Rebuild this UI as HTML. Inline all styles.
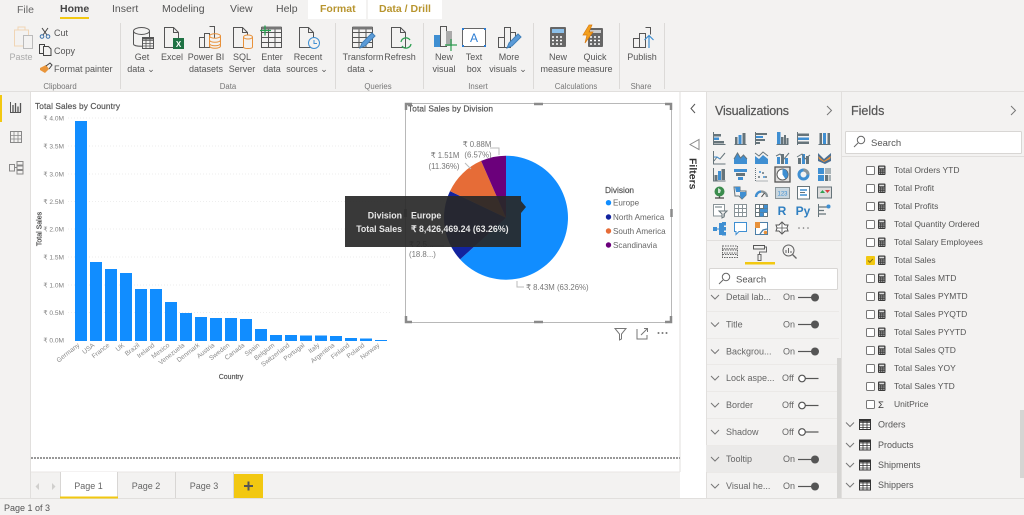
<!DOCTYPE html>
<html><head><meta charset="utf-8"><title>Power BI</title>
<style>
html,body{margin:0;padding:0;width:1024px;height:515px;overflow:hidden;background:#f3f2f1}
svg{display:block;font-family:"Liberation Sans",sans-serif;filter:blur(.35px)}
.r{font-size:9px;fill:#555;text-anchor:middle}
.g{font-size:7.8px;fill:#777;text-anchor:middle}
.t{font-size:10.5px;fill:#555}
.i{fill:none;stroke:#555;stroke-width:1}
.b{fill:#3f8fd2}.k{fill:#66747a}
.v{fill:none;stroke:#66747a;stroke-width:1}
.ya{font-size:6.6px;fill:#808080;text-anchor:end}
.xa{font-size:6.6px;fill:#8a8a8a;text-anchor:end}
.f{font-size:9px;fill:#555}
.fd{font-size:8.5px;fill:#555}
.p{font-size:7.8px;fill:#777}
.l{font-size:8.1px;fill:#666}
.fl{font-size:9px;fill:#666}
.on{font-size:9px;fill:#666}
.h{fill:#555;stroke:#555;stroke-width:.2}
</style></head><body>
<svg width="1024" height="515" viewBox="0 0 1024 515" xmlns="http://www.w3.org/2000/svg">
<defs>
<g id="calc"><rect x="0" y="1" width="7.500" height="9.500" rx="1" fill="#3a3a3a"/><rect x="1.200" y="2.200" width="5" height="1.600" fill="#ddd"/><path d="M1.200 5.500h1M3.300 5.500h1M5.400 5.500h1M1.200 7.300h1M3.300 7.300h1M5.400 7.300h1M1.200 9.100h1M3.300 9.100h1M5.400 9.100h1" stroke="#ddd" stroke-width=".9"/></g>
<g id="tbl"><rect x=".5" y=".5" width="11" height="10" fill="#fff" stroke="#333"/><path d="M.5 3.500h11M.5 6h11M.5 8.500h11M4 1v10M8 1v10" stroke="#333" stroke-width=".8"/><rect x=".5" y=".5" width="11" height="2.300" fill="#333"/></g>
<path id="chev" d="M0 0l4 4 4-4" fill="none" stroke="#777" stroke-width="1"/>
<g id="tOn"><path d="M0 0h16" stroke="#555" stroke-width="1.200"/><circle cx="17" cy="0" r="4" fill="#555"/></g>
<g id="tOff"><circle cx="4" cy="0" r="3.300" fill="#fff" stroke="#555" stroke-width="1.200"/><path d="M7.500 0h13" stroke="#555" stroke-width="1.200"/></g>
<rect id="cb" x=".5" y=".5" width="8" height="8" rx="1" fill="#fff" stroke="#777"/>
</defs>

<!-- backgrounds -->
<rect width="1024" height="515" fill="#f3f2f1"/>
<rect x="31" y="92" width="649" height="380" fill="#fff"/>
<rect x="680" y="92" width="26" height="406" fill="#fff"/>
<rect x="0" y="91" width="1024" height="1" fill="#e1dfdd"/>
<rect x="30" y="92" width="1" height="406" fill="#e1dfdd"/>
<rect x="679.500" y="92" width="1" height="380" fill="#e1dfdd"/>
<rect x="706" y="92" width="1" height="406" fill="#e1dfdd"/>
<rect x="841" y="92" width="1" height="406" fill="#e1dfdd"/>
<rect x="0" y="498" width="1024" height="1" fill="#e1dfdd"/>

<!-- tabs -->
<rect x="308" y="0" width="58" height="19" fill="#fff"/>
<rect x="368" y="0" width="74" height="19" fill="#fff"/>
<text x="17" y="13" class="t" style="fill:#666">File</text>
<text x="60" y="12" class="t" style="font-weight:bold;fill:#444">Home</text>
<rect x="60" y="17" width="29" height="2" fill="#f2c811"/>
<text x="112" y="12" class="t">Insert</text>
<text x="162" y="12" class="t">Modeling</text>
<text x="230" y="12" class="t">View</text>
<text x="276" y="12" class="t">Help</text>
<text x="320" y="12" class="t" style="fill:#b8952f;font-weight:bold">Format</text>
<text x="379" y="12" class="t" style="fill:#b8952f;font-weight:bold">Data / Drill</text>

<!-- ribbon separators -->
<path d="M120.500 23v66M335.500 23v66M423.500 23v66M533.500 23v66M619.500 23v66M664.500 23v66" stroke="#dcdad8"/>

<!-- ribbon labels -->
<text x="21" y="60" class="r" style="fill:#aaa">Paste</text>
<text x="54" y="36" class="f">Cut</text>
<text x="54" y="54" class="f">Copy</text>
<text x="54" y="72" class="f">Format painter</text>
<text x="60" y="89" class="g">Clipboard</text>
<text x="142" y="60" class="r">Get</text><text x="141" y="72" class="r">data ⌄</text>
<text x="172" y="60" class="r">Excel</text>
<text x="206" y="60" class="r">Power BI</text><text x="206" y="72" class="r">datasets</text>
<text x="242" y="60" class="r">SQL</text><text x="242" y="72" class="r">Server</text>
<text x="272" y="60" class="r">Enter</text><text x="272" y="72" class="r">data</text>
<text x="308" y="60" class="r">Recent</text><text x="307" y="72" class="r">sources ⌄</text>
<text x="228" y="89" class="g">Data</text>
<text x="363" y="60" class="r">Transform</text><text x="361" y="72" class="r">data ⌄</text>
<text x="400" y="60" class="r">Refresh</text>
<text x="378" y="89" class="g">Queries</text>
<text x="444" y="60" class="r">New</text><text x="444" y="72" class="r">visual</text>
<text x="474" y="60" class="r">Text</text><text x="474" y="72" class="r">box</text>
<text x="509" y="60" class="r">More</text><text x="508" y="72" class="r">visuals ⌄</text>
<text x="478" y="89" class="g">Insert</text>
<text x="558" y="60" class="r">New</text><text x="558" y="72" class="r">measure</text>
<text x="595" y="60" class="r">Quick</text><text x="595" y="72" class="r">measure</text>
<text x="576" y="89" class="g">Calculations</text>
<text x="642" y="60" class="r">Publish</text>
<text x="641" y="89" class="g">Share</text>

<!-- ribbon icons -->
<g class="i">
<path d="M14.500 30h14v16h-14z" stroke="#f0d5b5"/><path d="M18 30v-3h7v3" stroke="#f0d5b5"/><rect x="23.500" y="35.500" width="9" height="13" fill="#f3f2f1" stroke="#bbb"/>
<path d="M42 28l5 7M48 28l-5 7" stroke="#444"/><circle cx="42" cy="36.500" r="1.800" stroke="#3a70a8"/><circle cx="48" cy="36.500" r="1.800" stroke="#3a70a8"/>
<path d="M39.500 44.500h5v9h-5z" stroke="#444"/><path d="M43.500 46.500h5l2.500 2.500v6.500h-7.500z" fill="#f3f2f1" stroke="#444"/>
<path d="M40 68l6-3 3 4-4 4-5-3z" fill="#e9953a" stroke="none"/><path d="M46 66l4-3 2 2-3 4" stroke="#444"/>
<path d="M133.500 31v13c0 3 16 3 16 0V31" /><ellipse cx="141.500" cy="31" rx="8" ry="3.500"/><rect x="142.500" y="37.500" width="11" height="11" fill="#f3f2f1"/><path d="M142.500 40.500h11M142.500 43.500h11M142.500 46h11M146 38v10M150 38v10" stroke-width=".8"/><rect x="142.500" y="37.500" width="11" height="2" fill="#555" stroke="none"/>
<path d="M164.500 27.500h9l5 5v15h-14z"/><path d="M173.500 27.500v5h5"/><rect x="173" y="38" width="11" height="11" fill="#1f7244" stroke="none"/>
<path d="M199.500 37.500h5v10h-5zM204.500 33.500h5v14h-5zM209.500 26.500h5v12"/><g stroke="#e8913a"><path d="M209.500 36v10c0 3 11 3 11 0V36"/><ellipse cx="215" cy="36" rx="5.500" ry="2.200"/><path d="M209.500 40c0 3 11 3 11 0M209.500 43.500c0 3 11 3 11 0"/></g>
<path d="M233.500 27.500h9l5 5v15h-14z"/><path d="M242.500 27.500v5h5"/><g stroke="#e8913a"><path d="M243.500 37v10c0 2 9 2 9 0V37" fill="#f3f2f1"/><ellipse cx="248" cy="37" rx="4.500" ry="2" fill="#f3f2f1"/></g>
<rect x="261.500" y="27.500" width="20" height="20"/><path d="M261.500 32.500h20M261.500 37.500h20M261.500 42.500h20M268.500 28v20M275 28v20"/><rect x="261.500" y="26.500" width="20" height="3" fill="#777" stroke="none"/><path d="M265 25.500v10M260 30.500h11" stroke="#27a050" stroke-width="1.300"/>
<path d="M299.500 27.500h9l5 5v15h-14z"/><path d="M308.500 27.500v5h5"/><circle cx="314" cy="43" r="5.500" fill="#f3f2f1" stroke="#3f8fd2"/><path d="M314 40v3.500h3" stroke="#3f8fd2"/>
<rect x="352.500" y="27.500" width="20" height="20"/><path d="M352.500 32.500h20M352.500 37.500h20M352.500 42.500h20M359 28v20M366 28v20"/><rect x="352.500" y="26.500" width="20" height="3" fill="#777" stroke="none"/><path d="M360 48l2-5 10-10 3 3-10 10z" fill="#5b9bd8" stroke="#3f7fb8"/>
<path d="M391.500 27.500h9l5 5v15h-14z"/><path d="M400.500 27.500v5h5"/><path d="M401 42a5 5 0 0 1 9-2M411 44a5 5 0 0 1-9 2" stroke="#2ea052" stroke-width="1.300"/>
<rect x="434" y="35" width="6" height="12" fill="#3f8fd2" stroke="none"/><path d="M440.500 26.500h6v20h-6z"/><rect x="446" y="31" width="6" height="15" fill="#aaa" stroke="none"/><path d="M451 39v12M445 45h12" stroke="#2ea052" stroke-width="1.200"/>
<rect x="462.500" y="28.500" width="23" height="18" fill="#fff" stroke="#666"/><rect x="462" y="28" width="2" height="2" fill="#2b7cd3" stroke="none"/><rect x="484" y="28" width="2" height="2" fill="#2b7cd3" stroke="none"/><rect x="462" y="45" width="2" height="2" fill="#2b7cd3" stroke="none"/><rect x="484" y="45" width="2" height="2" fill="#2b7cd3" stroke="none"/>
<path d="M498.500 37.500h6v10h-6zM504.500 27.500h6v20h-6zM510.500 32.500h5v6"/><path d="M507 48l2-5 9-9 3 3-9 9z" fill="#5b9bd8" stroke="#3f7fb8"/>
<rect x="550" y="27" width="16" height="20" rx="1" fill="#666" stroke="none"/><rect x="552" y="29" width="12" height="4" fill="#8cc0ea" stroke="none"/><path d="M552 37h2M556 37h2M560 37h2M552 40.500h2M556 40.500h2M560 40.500h2M552 44h2M556 44h2M560 44h2" stroke="#fff" stroke-width="1.500"/>
<rect x="588" y="28" width="15" height="19" rx="1" fill="#666" stroke="none"/><rect x="590" y="30" width="11" height="3" fill="#ccc" stroke="none"/><path d="M590 37h2M594 37h2M598 37h2M590 40.500h2M594 40.500h2M598 40.500h2M590 44h2M594 44h2M598 44h2" stroke="#fff" stroke-width="1.500"/><path d="M589 25l-6 10h4l-2 8 8-11h-4l3-7z" fill="#f2a01e" stroke="#d97a10" stroke-width=".7"/>
<path d="M633.500 38.500h6v9h-6zM639.500 33.500h6v14h-6zM645.500 27.500h5v7"/><path d="M649 48V36M644.500 40l4.500-4.500 4.500 4.500" stroke="#3f8fd2" stroke-width="1.200"/>
</g>
<text x="474" y="42" font-size="12" fill="#2b7cd3" text-anchor="middle">A</text>
<text x="178.500" y="47" font-size="8" fill="#fff" font-weight="bold" text-anchor="middle">X</text>

<!-- left nav -->
<rect x="0" y="95" width="2" height="27" fill="#f2c811"/>
<g fill="none" stroke="#555">
<path d="M10.500 102v10.500h10.500"/><path d="M13 105v7M15.500 103v9M18 106.500v5.500M20.500 103v9" stroke-width="1.300"/>
<rect x="10.500" y="131.500" width="11" height="11" stroke="#888"/><path d="M10.500 135.500h11M10.500 139h11M14 132v11M18 132v11" stroke="#888" stroke-width=".8"/>
<path d="M9.500 164.500h5v6.500h-5zM17 161.500h6v3.500h-6zM17 166h6v3.500h-6zM17 170.500h6v3.500h-6zM14.500 167.500h2.500" stroke="#888"/>
</g>

<!-- bar chart -->
<text x="35" y="109" font-size="8.300" class="h" textLength="85">Total Sales by Country</text>
<g stroke="#eee" stroke-width="1" stroke-dasharray="1 2">
<path d="M68 118h322M68 146h322M68 174h322M68 201.500h322M68 229h322M68 257h322M68 285h322M68 312.500h322"/>
</g>
<g class="ya">
<text x="64" y="120.500">₹ 4.0M</text><text x="64" y="148.500">₹ 3.5M</text><text x="64" y="176.500">₹ 3.0M</text><text x="64" y="204">₹ 2.5M</text><text x="64" y="231.500">₹ 2.0M</text><text x="64" y="259.500">₹ 1.5M</text><text x="64" y="287.500">₹ 1.0M</text><text x="64" y="315">₹ 0.5M</text><text x="64" y="342.500">₹ 0.0M</text>
</g>
<g fill="#118dff">
<rect x="75" y="121" width="12" height="220"/>
<rect x="90" y="262" width="12" height="79"/>
<rect x="105" y="269" width="12" height="72"/>
<rect x="120" y="273" width="12" height="68"/>
<rect x="135" y="289" width="12" height="52"/>
<rect x="150" y="289" width="12" height="52"/>
<rect x="165" y="302" width="12" height="39"/>
<rect x="180" y="313" width="12" height="28"/>
<rect x="195" y="317" width="12" height="24"/>
<rect x="210" y="318" width="12" height="23"/>
<rect x="225" y="318" width="12" height="23"/>
<rect x="240" y="319" width="12" height="22"/>
<rect x="255" y="329" width="12" height="12"/>
<rect x="270" y="335" width="12" height="6"/>
<rect x="285" y="335" width="12" height="6"/>
<rect x="300" y="335.500" width="12" height="5.500"/>
<rect x="315" y="335.500" width="12" height="5.500"/>
<rect x="330" y="336" width="12" height="5"/>
<rect x="345" y="338" width="12" height="3"/>
<rect x="360" y="338.500" width="12" height="2.500"/>
<rect x="375" y="340" width="12" height="1"/>
</g>
<g class="xa">
<text transform="translate(80 346) rotate(-38)">Germany</text>
<text transform="translate(95 346) rotate(-38)">USA</text>
<text transform="translate(110 346) rotate(-38)">France</text>
<text transform="translate(125 346) rotate(-38)">UK</text>
<text transform="translate(140 346) rotate(-38)">Brazil</text>
<text transform="translate(155 346) rotate(-38)">Ireland</text>
<text transform="translate(170 346) rotate(-38)">Mexico</text>
<text transform="translate(185 346) rotate(-38)">Venezuela</text>
<text transform="translate(200 346) rotate(-38)">Denmark</text>
<text transform="translate(215 346) rotate(-38)">Austria</text>
<text transform="translate(230 346) rotate(-38)">Sweden</text>
<text transform="translate(245 346) rotate(-38)">Canada</text>
<text transform="translate(260 346) rotate(-38)">Spain</text>
<text transform="translate(275 346) rotate(-38)">Belgium</text>
<text transform="translate(290 346) rotate(-38)">Switzerland</text>
<text transform="translate(305 346) rotate(-38)">Portugal</text>
<text transform="translate(320 346) rotate(-38)">Italy</text>
<text transform="translate(335 346) rotate(-38)">Argentina</text>
<text transform="translate(350 346) rotate(-38)">Finland</text>
<text transform="translate(365 346) rotate(-38)">Poland</text>
<text transform="translate(380 346) rotate(-38)">Norway</text>
</g>
<text transform="translate(41.500 229) rotate(-90)" font-size="7" class="h" text-anchor="middle" style="fill:#444;stroke:#444">Total Sales</text>
<text x="231" y="379" font-size="7" class="h" text-anchor="middle">Country</text>

<!-- dotted page line -->
<path d="M31 458h649" stroke="#777" stroke-width="1.500" stroke-dasharray="2 1"/>

<!-- pie visual -->
<rect x="405.500" y="103.500" width="266" height="219" fill="#fff" stroke="#b8b8b8"/>
<g fill="none" stroke="#8a8a8a" stroke-width="2.500">
<path d="M406 110v-6h6M665 104h6v6M406 316v6h6M665 322h6v-6"/>
<path d="M534 104h9M534 322h9M405.500 209v8M671.500 209v8"/>
</g>
<text x="408" y="111.500" font-size="8.300" class="h" textLength="85">Total Sales by Division</text>
<path d="M506 217.700V155.700A62 62 0 1 1 460.100 259.400Z" fill="#118dff"/>
<path d="M506 217.700L460.100 259.400A62 62 0 0 1 450 191.100Z" fill="#12239e"/>
<path d="M506 217.700L450 191.100A62 62 0 0 1 481.100 160.900Z" fill="#e66c37"/>
<path d="M506 217.700L481.100 160.900A62 62 0 0 1 506 155.700Z" fill="#6b007b"/>
<g fill="none" stroke="#bbb">
<path d="M490 148h9v7M465 163l6 6M517 281v6h7"/>
<path d="M430 246h14"/>
</g>
<g class="p">
<text x="477" y="147" text-anchor="middle">₹ 0.88M</text>
<text x="478" y="157.500" text-anchor="middle">(6.57%)</text>
<text x="445" y="158" text-anchor="middle">₹ 1.51M</text>
<text x="444" y="169" text-anchor="middle">(11.36%)</text>
<text x="409" y="247">₹ 2.5...</text>
<text x="409" y="257">(18.8...)</text>
<text x="526" y="290">₹ 8.43M (63.26%)</text>
</g>
<text x="605" y="193" font-size="8.300" class="h">Division</text>
<circle cx="608.500" cy="202.700" r="2.700" fill="#118dff"/><text x="613" y="205.500" class="l">Europe</text>
<circle cx="608.500" cy="217" r="2.700" fill="#12239e"/><text x="613" y="220" class="l">North America</text>
<circle cx="608.500" cy="231" r="2.700" fill="#e66c37"/><text x="613" y="234" class="l">South America</text>
<circle cx="608.500" cy="245" r="2.700" fill="#6b007b"/><text x="613" y="248" class="l">Scandinavia</text>

<!-- tooltip -->
<path d="M345 196H521V201L526 207 521 213V247H345Z" fill="#282828" fill-opacity=".92"/>
<g font-size="8.800" font-weight="bold" fill="#e8e8e8">
<text x="402" y="218.500" text-anchor="end">Division</text>
<text x="402" y="232" text-anchor="end">Total Sales</text>
<text x="411" y="218.500">Europe</text>
<text x="411" y="232">₹ 8,426,469.24 (63.26%)</text>
</g>

<!-- visual header -->
<g fill="none" stroke="#777">
<path d="M615 328.500h11l-4.500 5.500v5l-2 1v-6z"/>
<path d="M637 329v10h10v-4M641 335l6-6M644 328.500h3.500v3.500"/>
</g>
<g fill="#777"><circle cx="658.500" cy="333" r="1"/><circle cx="662.500" cy="333" r="1"/><circle cx="666.500" cy="333" r="1"/></g>

<!-- filters panel -->
<path d="M695 104l-4 4.500 4 4.500" fill="none" stroke="#555"/>
<path d="M690 144.500l9-5v10z" fill="none" stroke="#888"/>
<text transform="translate(689.500 158) rotate(90)" font-size="10.500" font-weight="bold" fill="#333">Filters</text>

<!-- visualizations -->
<text x="715" y="115" font-size="12.500" class="h" textLength="74">Visualizations</text>
<path d="M827 106l4.500 4.500-4.500 4.500" fill="none" stroke="#777"/>
<rect x="707" y="240" width="134" height="1" fill="#e1dfdd"/>

<!-- icon grid -->
<g>
<g transform="translate(713 132)"><path class="v" d="M.5 0v13M.5 12.500h12"/><rect x="1" y="2" width="7" height="2.500" class="k"/><rect x="1" y="5.500" width="5" height="2.500" class="b"/><rect x="1" y="9" width="10" height="2.500" class="k"/></g>
<g transform="translate(734 132)"><path class="v" d="M.5 12.500h12"/><rect x="1" y="5" width="2.500" height="7" class="k"/><rect x="4.500" y="3" width="3" height="9" class="b"/><rect x="8.500" y="1" width="3" height="11" class="k"/></g>
<g transform="translate(755 132)"><path class="v" d="M.5 0v13"/><rect x="1" y="1" width="11" height="2" class="k"/><rect x="1" y="4" width="7" height="2" class="b"/><rect x="1" y="7" width="9" height="2" class="k"/><rect x="1" y="10" width="4" height="2" class="k"/></g>
<g transform="translate(776 132)"><path class="v" d="M.5 12.500h12"/><rect x="1" y="0" width="3.500" height="12" class="b"/><rect x="5" y="5" width="2.500" height="7" class="k"/><rect x="8" y="3" width="2" height="9" class="k"/><rect x="10.500" y="6" width="2" height="6" class="k"/></g>
<g transform="translate(797 132)"><path class="v" d="M.5 0v13"/><rect x="1" y="1.500" width="11" height="2.500" class="k"/><rect x="1" y="5.500" width="11" height="2.500" class="b"/><rect x="1" y="9.500" width="11" height="2.500" class="k"/></g>
<g transform="translate(818 132)"><path class="v" d="M.5 12.500h12"/><rect x="1.500" y="1" width="2.500" height="11" class="k"/><rect x="5" y="1" width="3" height="11" class="b"/><rect x="9.500" y="1" width="2.500" height="11" class="k"/></g>
<g transform="translate(713 151)"><path class="v" d="M.5 0v13h12"/><path d="M1 10l3-4 3 2 5-6" fill="none" stroke="#66747a"/><path d="M1 6l3 0 3 2" fill="none" stroke="#3f8fd2"/></g>
<g transform="translate(734 151)"><path d="M0 13V8l3.500-6 3 5 3-3 3.500 4v5z" class="b"/><path class="v" d="M0 8l3.500-6 3 5 3-3 3.500 4"/></g>
<g transform="translate(755 151)"><path d="M0 5l4 3 4-4 5 4v5H0z" class="b"/><path class="v" d="M0 2l4 3 4-4 5 4"/></g>
<g transform="translate(776 151)"><rect x="1" y="6" width="3" height="7" class="b"/><rect x="5" y="3" width="3" height="10" class="k"/><rect x="9" y="7" width="3" height="6" class="b"/><path class="v" d="M0 5l4-2 4 5 5-6"/></g>
<g transform="translate(797 151)"><rect x="1" y="7" width="3" height="6" class="k"/><rect x="5" y="3" width="3" height="10" class="b"/><rect x="9" y="5" width="3" height="8" class="k"/><path class="v" d="M0 6l5-3 3 5 5-4"/></g>
<g transform="translate(818 151)"><path d="M0 2l6 6 7-6v8l-6 3-7-3z" fill="#4c6f92"/><path d="M0 5l6 5 7-5-1 3-6 3-5-3z" fill="#e8913a"/></g>
<g transform="translate(713 168)"><path class="v" d="M.5 0v13h12"/><rect x="1.500" y="7" width="3" height="5.500" class="k"/><rect x="5" y="3" width="3" height="9" class="b"/><rect x="8.500" y="1" width="3.500" height="11" class="k"/></g>
<g transform="translate(734 168)"><rect x="0" y="1" width="13" height="3" class="b"/><rect x="2" y="5" width="9" height="3" class="k"/><rect x="4" y="9" width="5" height="3" class="b"/></g>
<g transform="translate(755 168)"><path class="v" d="M.5 0v13h12" stroke-dasharray="1 1"/><g class="k"><circle cx="4" cy="9" r="1"/><circle cx="8" cy="5" r="1"/><circle cx="11" cy="9" r="1"/></g><g class="b"><circle cx="5" cy="4" r="1"/><circle cx="9" cy="9" r="1"/></g></g>
<rect x="775" y="167" width="15" height="15" fill="#e0dfde" stroke="#555" stroke-width="1.300"/>
<circle cx="782.500" cy="174.500" r="5.500" fill="#fff" stroke="#5c5c5c"/><path d="M782.500 174.500V169a5.500 5.500 0 0 1 3 10z" class="b"/>
<circle cx="803.500" cy="174.500" r="4.500" fill="none" stroke="#3f8fd2" stroke-width="3"/><path d="M803.500 170a4.500 4.500 0 0 1 4.500 4.500" fill="none" stroke="#8a9498" stroke-width="3"/>
<g transform="translate(818 168)"><rect x="0" y="0" width="6" height="13" class="b"/><rect x="7" y="0" width="6" height="6" fill="#a8b2b6"/><rect x="7" y="7" width="3" height="6" class="k"/><rect x="10.500" y="7" width="2.500" height="6" fill="#a8b2b6"/><rect x="0" y="6" width="6" height="1" fill="#f3f2f1"/></g>
<g transform="translate(713 186)"><circle cx="6.500" cy="5.500" r="5" fill="#3c8d4e"/><path d="M5 2l3 2-1 3-2 0z" fill="#cfe4d4"/><path d="M2 12h9M6.500 10.500V12" stroke="#444" stroke-width="1.300"/></g>
<g transform="translate(734 186)"><path d="M0 1h6v4l6 0v4l-4 4-3-3H1z" fill="none" stroke="#66747a"/><path d="M6 6h6v3l-4 4-2-3z" class="b"/><path d="M1 1h5v5H2z" class="b"/></g>
<g transform="translate(755 186)"><path d="M1 11a5.500 5.500 0 0 1 11 0" fill="none" stroke="#8a9498" stroke-width="2.300"/><path d="M1 11a5.500 5.500 0 0 1 5-5.500" fill="none" stroke="#3f8fd2" stroke-width="2.300"/><path d="M6.500 11l3-4" stroke="#444"/></g>
<g transform="translate(775 186)"><rect x=".5" y="1.500" width="14" height="11" fill="#c9d6de" stroke="#8a9498"/></g>
<text x="782.500" y="195.500" font-size="6" fill="#3f8fd2" text-anchor="middle">123</text>
<g transform="translate(797 186)"><rect x=".5" y=".5" width="12" height="12.500" fill="#fff" stroke="#66747a"/><path d="M3 4h7M3 9h7" stroke="#3f8fd2" stroke-width="1.500"/><path d="M3 6.500h5" stroke="#66747a"/></g>
<g transform="translate(817 186)"><rect x=".5" y="1" width="14" height="11" fill="#ddd" stroke="#66747a"/><path d="M3 7l2.500-3L8 7z" fill="#2ea052"/><path d="M8 4h5l-2.500 3z" fill="#d83b3b"/></g>
<g transform="translate(713 204)"><rect x=".5" y=".5" width="11" height="11.500" fill="#fff" stroke="#8a9498"/><path d="M2 3h7" stroke="#66747a"/><path d="M6 7h8l-3 3v3l-2 1v-4z" fill="#f3f2f1" stroke="#66747a"/></g>
<g transform="translate(734 204)"><rect x=".5" y=".5" width="12" height="12" fill="#fff" stroke="#8a9498"/><path d="M.5 4.500h12M.5 8.500h12M4.500 1v12M8.500 1v12" stroke="#8a9498"/></g>
<g transform="translate(755 204)"><rect x=".5" y=".5" width="12" height="12" fill="#fff" stroke="#66747a"/><path d="M.5 4.500h12M.5 8.500h12M4.500 1v12M8.500 1v12" stroke="#66747a"/><rect x="5" y="5" width="7.500" height="3.500" class="b"/><rect x="5" y="9" width="3.500" height="3.500" class="b"/><rect x="9" y="1" width="3.500" height="3.500" class="b"/></g>
<text x="782" y="215" font-size="12" font-weight="bold" fill="#2f7fc1" text-anchor="middle">R</text>
<text x="803" y="215" font-size="12" font-weight="bold" fill="#2f7fc1" text-anchor="middle">Py</text>
<g transform="translate(818 204)"><path class="v" d="M.5 0v13"/><path d="M1 3h8M1 6.500h5M1 10h7" stroke="#66747a" stroke-width="1.300"/><circle cx="10.500" cy="2.500" r="2" class="b"/></g>
<g transform="translate(713 222)"><rect x="0" y="5" width="4" height="4" class="b"/><rect x="6" y="1" width="5" height="12" class="b"/><rect x="9" y="0" width="4" height="3.500" class="b"/><rect x="9" y="5" width="4" height="3.500" class="b"/><rect x="9" y="10" width="4" height="3.500" class="b"/><path d="M4 7h3" stroke="#3f8fd2"/></g>
<path d="M734.500 222.500h12v9h-7.500l-3 3v-3h-1.500z" fill="#fff" stroke="#3f8fd2"/>
<g transform="translate(755 222)"><rect x=".5" y=".5" width="12" height="12" fill="#fff" stroke="#4c7fa8"/><rect x="0" y="0" width="5" height="6" fill="#e8913a"/><path d="M5 12l3-4 4-1" fill="none" stroke="#4c7fa8" stroke-width="1.300"/><circle cx="10.500" cy="10.500" r="1.800" fill="#e8913a"/></g>
<path d="M782 222l3 3 3-0-1 3 1 3-3 0-3 3-3-3-3 0 1-3-1-3 3 0z" fill="#fff" stroke="#555"/><path d="M777 228h10M782 223v10" stroke="#555" stroke-width=".8"/>
<g fill="#777"><circle cx="799" cy="228" r=".8"/><circle cx="803.500" cy="228" r=".8"/><circle cx="808" cy="228" r=".8"/></g>
</g>

<!-- viz tabs -->
<g fill="none" stroke="#666">
<rect x="722.500" y="246" width="15" height="2.800" stroke-dasharray="1.500 1"/><rect x="722.500" y="250" width="15" height="3" stroke-dasharray="1.500 1"/><rect x="722.500" y="254.500" width="15" height="3" stroke-dasharray="1.500 1"/>
<rect x="753.500" y="245.500" width="11" height="3.500" stroke="#555"/><path d="M764.500 247h2v5h-7v2"/><rect x="758" y="254.500" width="3" height="6"/>
<circle cx="788.500" cy="250.500" r="5.500"/><path d="M786 253v-3M788.500 253v-5M791 253v-2"/><path d="M792.500 254.500l4 4" stroke-width="1.300"/>
</g>
<rect x="745" y="262" width="30" height="2.500" fill="#f2c811"/>
<rect x="709.500" y="268.500" width="128" height="21" rx="1" fill="#fff" stroke="#d8d6d4"/>
<g fill="none" stroke="#666"><circle cx="726" cy="277" r="3.700"/><path d="M723 280l-4 4"/></g>
<text x="736" y="282.500" font-size="9.500" fill="#555">Search</text>

<!-- format rows -->
<rect x="706" y="445" width="133" height="27" fill="#ebeae9"/>
<path d="M707 311.500h132M707 338.500h132M707 364.500h132M707 391.500h132M707 418.500h132M707 445.500h132M707 472.500h132" stroke="#ebe9e7"/>
<rect x="837" y="358" width="4" height="140" fill="#d6d5d3"/>
<g>
<use href="#chev" x="711" y="295"/><text x="726" y="300" class="fl">Detail lab...</text><text x="783" y="300" class="on">On</text><use href="#tOn" x="798" y="297.500"/>
<use href="#chev" x="711" y="322.500"/><text x="726" y="327.500" class="fl">Title</text><text x="783" y="327.500" class="on">On</text><use href="#tOn" x="798" y="324.500"/>
<use href="#chev" x="711" y="349.500"/><text x="726" y="354.500" class="fl">Backgrou...</text><text x="783" y="354.500" class="on">On</text><use href="#tOn" x="798" y="351.500"/>
<use href="#chev" x="711" y="376"/><text x="726" y="381" class="fl">Lock aspe...</text><text x="782" y="381" class="on">Off</text><use href="#tOff" x="798" y="378.500"/>
<use href="#chev" x="711" y="403"/><text x="726" y="408" class="fl">Border</text><text x="782" y="408" class="on">Off</text><use href="#tOff" x="798" y="405.500"/>
<use href="#chev" x="711" y="430"/><text x="726" y="435" class="fl">Shadow</text><text x="782" y="435" class="on">Off</text><use href="#tOff" x="798" y="432"/>
<use href="#chev" x="711" y="457"/><text x="726" y="462" class="fl">Tooltip</text><text x="783" y="462" class="on">On</text><use href="#tOn" x="798" y="459.500"/>
<use href="#chev" x="711" y="484"/><text x="726" y="489" class="fl">Visual he...</text><text x="783" y="489" class="on">On</text><use href="#tOn" x="798" y="486.500"/>
</g>

<!-- fields -->
<text x="851" y="115" font-size="12.500" class="h">Fields</text>
<path d="M1011 106l4.500 4.500-4.500 4.500" fill="none" stroke="#777"/>
<rect x="845.500" y="131.500" width="176" height="22" rx="1" fill="#fff" stroke="#d8d6d4"/>
<g fill="none" stroke="#666"><circle cx="861" cy="140" r="3.700"/><path d="M858 143l-4 4"/></g>
<text x="871" y="146" font-size="9.500" fill="#555">Search</text>
<rect x="842" y="156" width="182" height="1" fill="#e1dfdd"/>
<g>
<use href="#cb" x="866" y="166"/><use href="#calc" x="878" y="164.500"/><text x="894" y="173" class="fd">Total Orders YTD</text>
<use href="#cb" x="866" y="184"/><use href="#calc" x="878" y="182.500"/><text x="894" y="191" class="fd">Total Profit</text>
<use href="#cb" x="866" y="202"/><use href="#calc" x="878" y="200.500"/><text x="894" y="209" class="fd">Total Profits</text>
<use href="#cb" x="866" y="220"/><use href="#calc" x="878" y="218.500"/><text x="894" y="227" class="fd">Total Quantity Ordered</text>
<use href="#cb" x="866" y="238"/><use href="#calc" x="878" y="236.500"/><text x="894" y="245" class="fd">Total Salary Employees</text>
<rect x="866" y="256" width="9" height="9" rx="1" fill="#f2c811"/><path d="M868 260.500l1.800 1.800 3-3.300" fill="none" stroke="#806c10"/><use href="#calc" x="878" y="254.500"/><text x="894" y="263" class="fd">Total Sales</text>
<use href="#cb" x="866" y="274"/><use href="#calc" x="878" y="272.500"/><text x="894" y="281" class="fd">Total Sales MTD</text>
<use href="#cb" x="866" y="292"/><use href="#calc" x="878" y="290.500"/><text x="894" y="299" class="fd">Total Sales PYMTD</text>
<use href="#cb" x="866" y="310"/><use href="#calc" x="878" y="308.500"/><text x="894" y="317" class="fd">Total Sales PYQTD</text>
<use href="#cb" x="866" y="328"/><use href="#calc" x="878" y="326.500"/><text x="894" y="335" class="fd">Total Sales PYYTD</text>
<use href="#cb" x="866" y="346"/><use href="#calc" x="878" y="344.500"/><text x="894" y="353" class="fd">Total Sales QTD</text>
<use href="#cb" x="866" y="364"/><use href="#calc" x="878" y="362.500"/><text x="894" y="371" class="fd">Total Sales YOY</text>
<use href="#cb" x="866" y="382"/><use href="#calc" x="878" y="380.500"/><text x="894" y="389" class="fd">Total Sales YTD</text>
<use href="#cb" x="866" y="400"/><text x="878" y="408" font-size="9.500" fill="#333">Σ</text><text x="894" y="407" class="fd">UnitPrice</text>
<use href="#chev" x="846" y="422.500"/><use href="#tbl" x="859" y="419"/><text x="878" y="427.500" class="f">Orders</text>
<use href="#chev" x="846" y="443"/><use href="#tbl" x="859" y="439.500"/><text x="878" y="448" class="f">Products</text>
<use href="#chev" x="846" y="463"/><use href="#tbl" x="859" y="459.500"/><text x="878" y="468" class="f">Shipments</text>
<use href="#chev" x="846" y="483"/><use href="#tbl" x="859" y="479.500"/><text x="878" y="488" class="f">Shippers</text>
</g>
<rect x="1020" y="410" width="4" height="68" fill="#d6d5d3"/>

<!-- page tabs -->
<path d="M31 472h649" stroke="#e8e6e4"/>
<path d="M39 483l-3.500 3.500 3.500 3.500zM52 483l3.500 3.500-3.500 3.500z" fill="#d0cfcd"/>
<rect x="60.500" y="472" width="57" height="26" fill="#fff"/>
<path d="M60.500 472v26M117.500 472v26M175.500 472v26M233.500 472v26" stroke="#d8d6d4"/>
<rect x="60" y="496.500" width="58" height="2" fill="#f2c811"/>
<rect x="234" y="474" width="29" height="24" fill="#f2c811"/>
<path d="M248.500 481.500v9M244 486h9" stroke="#555" stroke-width="2"/>
<text x="88.500" y="489" font-size="9" fill="#666" text-anchor="middle">Page 1</text>
<text x="146" y="489" font-size="9" fill="#666" text-anchor="middle">Page 2</text>
<text x="204" y="489" font-size="9" fill="#666" text-anchor="middle">Page 3</text>

<text x="4" y="511" font-size="9" fill="#555">Page 1 of 3</text>
</svg>
</body></html>
